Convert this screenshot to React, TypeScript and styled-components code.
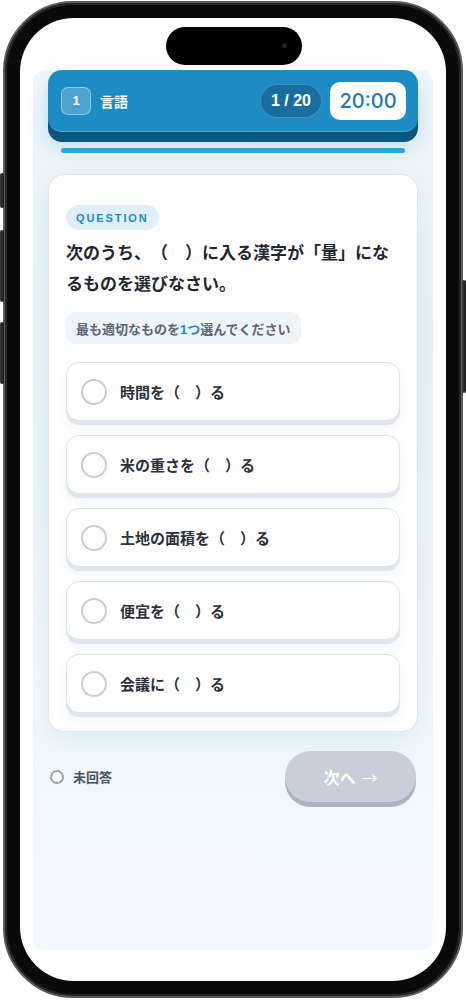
import React from 'react';
import styled, { createGlobalStyle } from 'styled-components';

const GlobalStyle = createGlobalStyle`
  html, body {
    margin: 0;
    padding: 0;
    background: #ffffff;
  }
  body {
    font-family: "Liberation Sans", "Noto Sans CJK JP", sans-serif;
    text-spacing-trim: space-all;
    -webkit-font-smoothing: antialiased;
  }
  * { box-sizing: border-box; }
`;

const Page = styled.div`
  width: 466px;
  height: 1000px;
  padding: 1px 3px 0;
`;

const Phone = styled.div`
  position: relative;
  width: 460px;
  height: 997px;
  border-radius: 70px;
  background: #0a0a0a;
  border: 2px solid #5c5c5c;
  box-shadow: inset 0 0 0 2px #262626;
  padding: 15px;
`;

const SideButton = styled.div<{ side: 'left' | 'right'; top: number; h: number }>`
  position: absolute;
  ${(p) => (p.side === 'left' ? 'left: -5px;' : 'right: -5px;')}
  top: ${(p) => p.top}px;
  width: 4px;
  height: ${(p) => p.h}px;
  border-radius: 2px;
  background: linear-gradient(90deg, #3a3a3a, #1c1c1c);
`;

const Screen = styled.div`
  position: relative;
  width: 100%;
  height: 100%;
  border-radius: 54px;
  background: #ffffff;
  overflow: hidden;
  padding-top: 52px;
`;

const Island = styled.div`
  position: absolute;
  top: 9px;
  left: 146px;
  width: 136px;
  height: 38px;
  border-radius: 19px;
  background: #000;
`;

const Camera = styled.span`
  position: absolute;
  left: 116px;
  top: 16px;
  width: 5px;
  height: 5px;
  border-radius: 50%;
  background: #16243f;
`;

const Content = styled.div`
  margin: 0 13px;
  height: 880px;
  border-radius: 12px;
  background: linear-gradient(180deg, #eef7fc 0%, #e7f2f9 30%, #eef7fc 70%, #f1f9fd 100%);
  padding: 0 15px;
  display: flex;
  flex-direction: column;
`;

const Header = styled.div`
  height: 62px;
  border-radius: 14px;
  background: #1e8cc4;
  border-bottom: 1px solid #4aa6d4;
  box-shadow: 0 10px 0 #0c577f, 0 14px 22px rgba(20, 90, 140, 0.18);
  display: flex;
  align-items: center;
  padding: 0 12px 0 13px;
  color: #fff;
`;

const SectionNo = styled.div`
  width: 30px;
  height: 28px;
  border-radius: 7px;
  background: rgba(255, 255, 255, 0.2);
  border: 1px solid rgba(255, 255, 255, 0.4);
  display: flex;
  align-items: center;
  justify-content: center;
  font-size: 13px;
  font-weight: 700;
`;

const SectionName = styled.div`
  margin-left: 9px;
  font-size: 14px;
  font-weight: 700;
  flex: 1;
`;

const Counter = styled.div`
  width: 62px;
  height: 34px;
  border-radius: 17px;
  background: #176fa0;
  border: 1px solid rgba(255, 255, 255, 0.22);
  display: flex;
  align-items: center;
  justify-content: center;
  font-size: 16px;
  font-weight: 700;
`;

const Timer = styled.div`
  margin-left: 8px;
  width: 76px;
  height: 38px;
  border-radius: 10px;
  background: #fff;
  color: #1b7db3;
  display: flex;
  align-items: center;
  justify-content: center;
  font-family: Inter, sans-serif;
  font-size: 20px;
  font-weight: 500;
`;

const Progress = styled.div`
  margin: 16px 13px 0;
  height: 5px;
  border-radius: 3px;
  background: #2aa5dd;
`;

const Card = styled.div`
  margin-top: 21px;
  background: #fff;
  border: 1px solid #dbe7f0;
  border-radius: 16px;
  padding: 30px 17px 18px;
  box-shadow: 0 8px 24px rgba(40, 110, 160, 0.08);
`;

const Tag = styled.div`
  display: inline-flex;
  align-items: center;
  height: 25px;
  padding: 0 10px;
  border-radius: 13px;
  background: #dff0fa;
  color: #1b8ac4;
  font-size: 11px;
  font-weight: 700;
  letter-spacing: 1.9px;
`;

const QuestionText = styled.div`
  margin-top: 8px;
  max-width: 332px;
  font-size: 17px;
  line-height: 31px;
  font-weight: 700;
  color: #1f2733;
`;

const Hint = styled.div`
  display: inline-flex;
  align-items: center;
  margin-top: 12px;
  height: 32px;
  padding: 0 10px;
  border-radius: 10px;
  background: #edf5fb;
  color: #5c6675;
  font-size: 13px;
  font-weight: 700;
`;

const Accent = styled.span`
  color: #1d8ac3;
`;

const Options = styled.div`
  margin-top: 18px;
  display: flex;
  flex-direction: column;
  gap: 14px;
`;

const Option = styled.div`
  height: 59px;
  display: flex;
  align-items: center;
  gap: 13px;
  padding: 0 14px;
  background: #fff;
  border: 1px solid #dde3ec;
  border-radius: 13px;
  box-shadow: 0 4px 0 #e1e5ee, 0 7px 12px rgba(90, 110, 140, 0.08);
`;

const Radio = styled.span<{ size: number; stroke: number; color: string }>`
  flex: none;
  width: ${(p) => p.size}px;
  height: ${(p) => p.size}px;
  border-radius: 50%;
  border: ${(p) => p.stroke}px solid ${(p) => p.color};
  background: #fff;
`;

const OptionLabel = styled.span`
  font-size: 15px;
  font-weight: 700;
  color: #2b303b;
`;

const Footer = styled.div`
  margin-top: 19px;
  padding: 0 2px;
  display: flex;
  align-items: center;
  justify-content: space-between;
`;

const Status = styled.div`
  display: flex;
  align-items: center;
  gap: 9px;
  font-size: 13px;
  font-weight: 700;
  color: #4a5261;
`;

const NextButton = styled.button`
  width: 131px;
  height: 51px;
  border: none;
  border-radius: 26px;
  background: #c8cfdb;
  box-shadow: 0 5px 0 #aab2c3;
  color: #fff;
  font-family: inherit;
  font-size: 16px;
  font-weight: 700;
  cursor: not-allowed;
`;

const Arrow = styled.span`
  font-family: "Noto Sans CJK JP", sans-serif;
  font-weight: 400;
  margin-left: 6px;
`;

const options = [
  '時間を（　）る',
  '米の重さを（　）る',
  '土地の面積を（　）る',
  '便宜を（　）る',
  '会議に（　）る',
];

const App: React.FC = () => {
  return (
    <Page>
      <GlobalStyle />
      <Phone>
        <SideButton side="left" top={170} h={35} />
        <SideButton side="left" top={227} h={72} />
        <SideButton side="left" top={319} h={62} />
        <SideButton side="right" top={277} h={113} />
        <Screen>
          <Island>
            <Camera />
          </Island>
          <Content>
            <Header>
              <SectionNo>1</SectionNo>
              <SectionName>言語</SectionName>
              <Counter>1 / 20</Counter>
              <Timer>20:00</Timer>
            </Header>
            <Progress />
            <Card>
              <Tag>QUESTION</Tag>
              <QuestionText>次のうち、（　）に入る漢字が「量」になるものを選びなさい。</QuestionText>
              <Hint>
                最も適切なものを<Accent>1つ</Accent>選んでください
              </Hint>
              <Options>
                {options.map((label) => (
                  <Option key={label}>
                    <Radio size={26} stroke={2} color="#c6ccd9" />
                    <OptionLabel>{label}</OptionLabel>
                  </Option>
                ))}
              </Options>
            </Card>
            <Footer>
              <Status>
                <Radio size={14} stroke={2.5} color="#9aa4ba" />
                未回答
              </Status>
              <NextButton disabled>
                次へ<Arrow>→</Arrow>
              </NextButton>
            </Footer>
          </Content>
        </Screen>
      </Phone>
    </Page>
  );
};

export default App;
